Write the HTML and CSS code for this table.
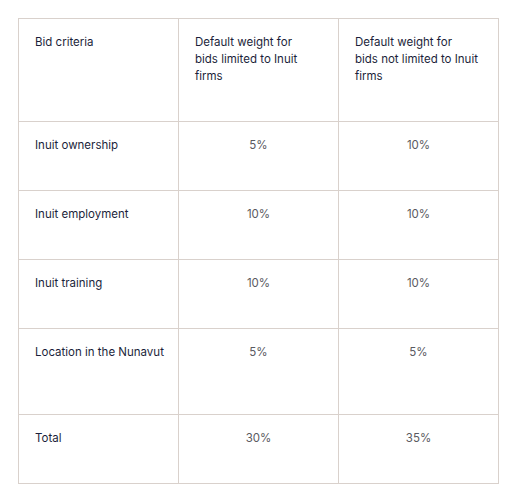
FILE: index.html
```html
<!DOCTYPE html>
<html lang="en">
<head>
<meta charset="utf-8">
<title>Bid criteria</title>
<link rel="stylesheet" href="styles.css">
</head>
<body>
<table class="weights">
  <thead>
    <tr class="row-head">
      <th>Bid criteria</th>
      <th>Default weight for<br>bids limited to Inuit<br>firms</th>
      <th>Default weight for<br>bids not limited to Inuit<br>firms</th>
    </tr>
  </thead>
  <tbody>
    <tr class="row">
      <td class="label">Inuit ownership</td>
      <td class="num">5%</td>
      <td class="num">10%</td>
    </tr>
    <tr class="row">
      <td class="label">Inuit employment</td>
      <td class="num">10%</td>
      <td class="num">10%</td>
    </tr>
    <tr class="row">
      <td class="label">Inuit training</td>
      <td class="num">10%</td>
      <td class="num">10%</td>
    </tr>
    <tr class="row row-tall">
      <td class="label">Location in the Nunavut</td>
      <td class="num">5%</td>
      <td class="num">5%</td>
    </tr>
    <tr class="row">
      <td class="label">Total</td>
      <td class="num">30%</td>
      <td class="num">35%</td>
    </tr>
  </tbody>
</table>
</body>
</html>
```

FILE: styles.css
```css
html, body {
  margin: 0;
  padding: 0;
  background: #ffffff;
}

body {
  padding: 18px 0 0 18px;
  font-family: Inter, "Noto Sans", sans-serif;
  font-size: 11.5px;
  line-height: 17px;
  color: #1c1f3b;
}

.weights {
  border-collapse: collapse;
  table-layout: fixed;
  width: 481px;
}

.weights th,
.weights td {
  border: 1px solid #d9d1cc;
  padding: 15px 16px 0 16px;
  vertical-align: top;
  box-sizing: border-box;
  font-weight: 400;
  text-align: left;
}

.weights td.label {
  white-space: nowrap;
  padding-right: 4px;
}

.row-head th {
  height: 103px;
}

.row td {
  height: 69px;
}

.row-tall td {
  height: 86px;
}

.weights td.num {
  text-align: center;
  color: #5a5a5f;
}
```
